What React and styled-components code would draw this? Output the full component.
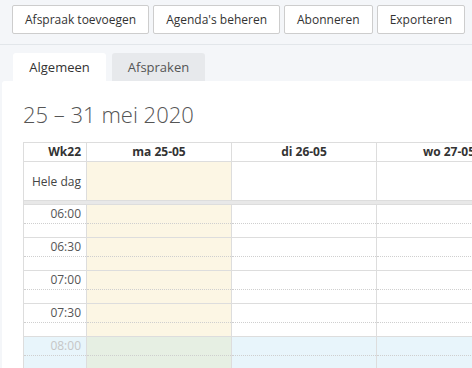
import React from "react";
import styled, { createGlobalStyle, css } from "styled-components";

const days = ["ma 25-05", "di 26-05", "wo 27-05", "do 28-05", "vr 29-05", "za 30-05", "zo 31-05"];
const slots = [
  { time: "06:00" },
  { time: "06:30" },
  { time: "07:00" },
  { time: "07:30" },
  { time: "08:00", office: true },
  { time: "08:30", office: true },
];

const App = () => {
  return (
    <>
      <GlobalStyle />
      <Toolbar>
        <ToolButton>Afspraak toevoegen</ToolButton>
        <ToolButton>Agenda's beheren</ToolButton>
        <ToolButton>Abonneren</ToolButton>
        <ToolButton>Exporteren</ToolButton>
      </Toolbar>
      <TabBar>
        <Tab $active>Algemeen</Tab>
        <Tab>Afspraken</Tab>
      </TabBar>
      <Panel>
        <Title>25 – 31 mei 2020</Title>
        <Calendar>
          <HeadCell $label>Wk22</HeadCell>
          {days.map((d) => (
            <HeadCell key={d}>{d}</HeadCell>
          ))}

          <AllDayCell $label>Hele dag</AllDayCell>
          {days.map((d, i) => (
            <AllDayCell key={d} $today={i === 0} />
          ))}

          <Divider />
          {days.map((d, i) => (
            <Divider key={d} $today={i === 0} />
          ))}

          {slots.map((s) => (
            <React.Fragment key={s.time}>
              <Slot $office={s.office}>
                <SlotTop>
                  <TimeLabel $office={s.office}>{s.time}</TimeLabel>
                </SlotTop>
              </Slot>
              {days.map((d, i) => (
                <Slot key={d} $office={s.office} $today={i === 0}>
                  <SlotTop />
                </Slot>
              ))}
            </React.Fragment>
          ))}
        </Calendar>
      </Panel>
    </>
  );
};

const GlobalStyle = createGlobalStyle`
  * { box-sizing: border-box; }
  body {
    margin: 0;
    background: #f4f6f9;
    font-family: "Open Sans", "DejaVu Sans", sans-serif;
    color: #333;
    overflow: hidden;
  }
`;

const Toolbar = styled.div`
  display: flex;
  gap: 4px;
  padding: 5px 12px 10px;
  border-bottom: 1px solid #e2e6ea;
`;

const ToolButton = styled.button`
  flex-shrink: 0;
  white-space: nowrap;
  height: 29px;
  padding: 0 12px;
  background: #fff;
  border: 1px solid #cdcdcd;
  border-radius: 2px;
  font-family: inherit;
  font-size: 12px;
  color: #333;
`;

const TabBar = styled.div`
  display: flex;
  gap: 6px;
  padding: 8px 0 0 13px;
`;

const Tab = styled.div`
  width: 93px;
  height: 28px;
  line-height: 28px;
  text-align: center;
  font-size: 13px;
  border-radius: 3px 3px 0 0;
  background: ${({ $active }) => ($active ? "#fff" : "#e7e9ec")};
  color: ${({ $active }) => ($active ? "#333" : "#555")};
`;

const Panel = styled.div`
  margin-left: 2px;
  height: 300px;
  background: #fff;
  border-radius: 3px 0 0 0;
  padding: 17px 0 0 21px;
  overflow: hidden;
`;

const Title = styled.h1`
  margin: 0 0 12px;
  font-size: 22px;
  line-height: 32px;
  font-weight: 300;
  color: #555;
  white-space: nowrap;
`;

const Calendar = styled.div`
  display: grid;
  grid-template-columns: 63px repeat(7, 145px);
  width: max-content;
  border-left: 1px solid #ddd;
  border-top: 1px solid #ddd;
  font-size: 12px;
  white-space: nowrap;
`;

const cellBase = css`
  border-right: 1px solid #ddd;
  border-bottom: 1px solid #ddd;
`;

const HeadCell = styled.div`
  ${cellBase};
  height: 19px;
  line-height: 18px;
  font-weight: 700;
  color: #333;
  text-align: ${({ $label }) => ($label ? "right" : "center")};
  padding-right: ${({ $label }) => ($label ? "5px" : "0")};
`;

const AllDayCell = styled.div`
  ${cellBase};
  height: 39px;
  display: flex;
  align-items: center;
  justify-content: flex-end;
  padding-right: 5px;
  color: #444;
  background: ${({ $today }) => ($today ? "#fcf6e4" : "#fff")};
`;

const Divider = styled.div`
  ${cellBase};
  border-right: none;
  height: 4px;
  background: #e8e8e8;
`;

const Slot = styled.div`
  ${cellBase};
  height: 33px;
  background: ${({ $today, $office }) =>
    $office ? ($today ? "#e6efe3" : "#e8f5fb") : $today ? "#fcf6e4" : "#fff"};
`;

const SlotTop = styled.div`
  height: 19px;
  border-bottom: 1px dotted #cfcfcf;
`;

const TimeLabel = styled.div`
  line-height: 18px;
  text-align: right;
  padding-right: 5px;
  color: ${({ $office }) => ($office ? "#c6c6c6" : "#555")};
`;

export default App;
